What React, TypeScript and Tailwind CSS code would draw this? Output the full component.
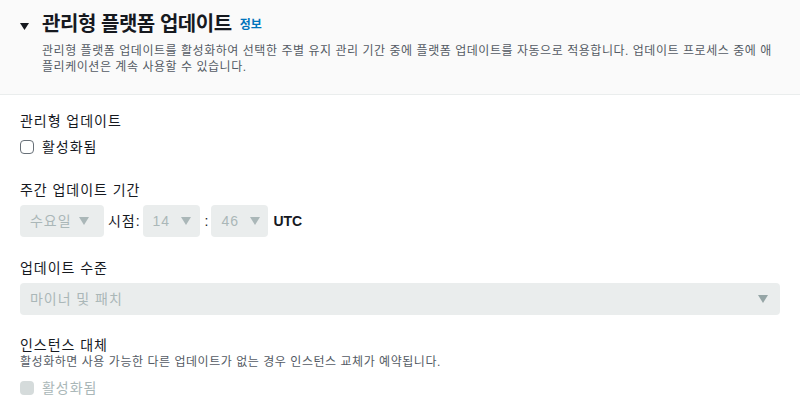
const font = "font-['Liberation_Sans','Noto_Sans_CJK_KR',sans-serif]";

function Caret({ className }: { className: string }) {
  return (
    <svg width="10" height="8" viewBox="0 0 10 8" className={className}>
      <path d="M0 0 L10 0 L5 8 Z" fill="currentColor" />
    </svg>
  );
}

function Select({ value, width, caretGap }: { value: string; width: string; caretGap: string }) {
  return (
    <div className={`${width} h-8 rounded-sm bg-[#eaeded] flex items-center pl-2.5 text-sm text-[#aab7b8]`}>
      <span>{value}</span>
      <Caret className={`${caretGap} text-[#aab7b8]`} />
    </div>
  );
}

export default function App() {
  return (
    <div className={`${font} w-[800px] h-[419px] bg-white text-[#16191f] tracking-[0.06em] overflow-hidden`}>
      <div className="bg-[#fafafa] border-b border-[#eaeded] h-[95px] pt-2.5 pl-5 pr-5">
        <div className="flex items-center h-7">
          <svg width="9" height="7" viewBox="0 0 9 7" className="mt-[5px] mr-[13px] text-[#16191f]">
            <path d="M0 0 L9 0 L4.5 7 Z" fill="currentColor" />
          </svg>
          <h2 className="text-[20px] font-bold leading-7 tracking-[-0.45px]">관리형 플랫폼 업데이트</h2>
          <a className="ml-2 text-xs font-bold text-[#0073bb] mt-0.5 tracking-normal">정보</a>
        </div>
        <p className="ml-[22px] mt-[5px] text-xs leading-4 text-[#545b64] tracking-[0.045em]">
          관리형 플랫폼 업데이트를 활성화하여 선택한 주별 유지 관리 기간 중에 플랫폼 업데이트를 자동으로 적용합니다. 업데이트 프로세스 중에 애플리케이션은 계속 사용할 수 있습니다.
        </p>
      </div>

      <div className="px-5 pt-[17px] text-sm">
        <div className="leading-[18px]">관리형 업데이트</div>
        <label className="mt-[7px] flex items-center h-5">
          <span className="w-3.5 h-3.5 rounded-sm border border-[#687078] bg-white" />
          <span className="ml-2">활성화됨</span>
        </label>

        <div className="mt-6 leading-[18px]">주간 업데이트 기간</div>
        <div className="mt-1.5 flex items-center">
          <Select value="수요일" width="w-[84px]" caretGap="ml-[7px]" />
          <span className="ml-1">시점:</span>
          <div className="ml-[2px]">
            <Select value="14" width="w-[57px]" caretGap="ml-[11px]" />
          </div>
          <span className="ml-[5px]">:</span>
          <div className="ml-[2px]">
            <Select value="46" width="w-[57px]" caretGap="ml-[11px]" />
          </div>
          <span className="ml-[5px] font-bold tracking-normal">UTC</span>
        </div>

        <div className="mt-[22px] leading-[18px]">업데이트 수준</div>
        <div className="mt-1.5 h-8 rounded-sm bg-[#eaeded] flex items-center justify-between pl-2.5 pr-3 text-[#aab7b8]">
          <span>마이너 및 패치</span>
          <Caret className="text-[#95a5a6]" />
        </div>

        <div className="mt-[21px] leading-[18px]">인스턴스 대체</div>
        <div className="text-xs leading-4 text-[#545b64] tracking-[0.045em]">
          활성화하면 사용 가능한 다른 업데이트가 없는 경우 인스턴스 교체가 예약됩니다.
        </div>
        <label className="mt-2 flex items-center h-5">
          <span className="w-3.5 h-3.5 rounded-sm bg-[#d5dbdb]" />
          <span className="ml-2 text-[#aab7b8]">활성화됨</span>
        </label>
      </div>
    </div>
  );
}
